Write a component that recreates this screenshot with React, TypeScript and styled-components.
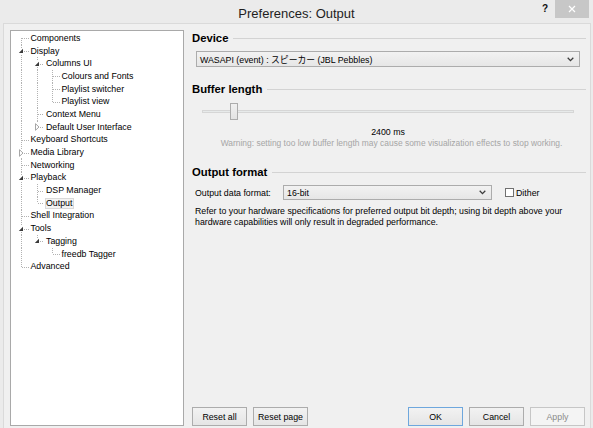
import React from 'react';
import styled, { createGlobalStyle } from 'styled-components';

const GlobalStyle = createGlobalStyle`
  html, body {
    margin: 0;
    padding: 0;
  }
  body {
    font-family: "Liberation Sans", Arial, "Noto Sans CJK JP", sans-serif;
    font-size: 8.8px;
    color: #000;
    background: #ebebeb;
  }
  * {
    box-sizing: border-box;
  }
`;

const Window = styled.div`
  width: 593px;
  height: 428px;
  overflow: hidden;
  display: flex;
  flex-direction: column;
  background: #ebebeb;
`;

const TitleBar = styled.div`
  flex: none;
  height: 23px;
  display: grid;
  grid-template-columns: 1fr auto 1fr;
`;

const Title = styled.div`
  grid-column: 2;
  padding-top: 7px;
  font-size: 13px;
  line-height: 14px;
  color: #1e1e1e;
  white-space: nowrap;
`;

const CaptionButtons = styled.div`
  grid-column: 3;
  justify-self: end;
  display: flex;
  align-items: flex-start;
  padding-right: 4px;
`;

const HelpGlyph = styled.span`
  margin-top: 4px;
  margin-right: 7px;
  font-size: 10px;
  font-weight: bold;
  line-height: 10px;
  color: #111;
`;

const CloseButton = styled.div`
  width: 34px;
  height: 18px;
  background: #c7c7c7;
  display: flex;
  align-items: center;
  justify-content: center;
`;

const Client = styled.div`
  flex: 1;
  min-height: 0;
  margin: 0 2px 0 3px;
  border: 1px solid #dadada;
  border-bottom: none;
  background: #f0f0f0;
  display: flex;
  gap: 6px;
  padding: 6px 4px 2px 6px;
`;

/* ---------- tree ---------- */

const Tree = styled.div`
  flex: none;
  width: 174px;
  border: 1px solid #a9a9a9;
  background: #fff;
  padding: 1px 0 0 3px;
`;

const Row = styled.div`
  height: 12.7px;
  display: flex;
  align-items: center;
  white-space: nowrap;
`;

const dotsV = 'repeating-linear-gradient(to bottom, #b2b2b2 0 1px, transparent 1px 2px)';
const dotsH = 'repeating-linear-gradient(to right, #b2b2b2 0 1px, transparent 1px 2px)';

const Guide = styled.span<{ $up?: boolean; $down?: boolean; $branch?: boolean }>`
  position: relative;
  flex: none;
  align-self: stretch;
  width: 15.5px;

  &::before {
    content: '';
    display: ${(p) => (p.$up || p.$down ? 'block' : 'none')};
    position: absolute;
    left: 7px;
    width: 1px;
    top: ${(p) => (p.$up ? '0' : '50%')};
    bottom: ${(p) => (p.$down ? '0' : '50%')};
    background: ${dotsV};
  }

  &::after {
    content: '';
    display: ${(p) => (p.$branch ? 'block' : 'none')};
    position: absolute;
    left: 8px;
    right: 1px;
    top: 50%;
    height: 1px;
    background: ${dotsH};
  }
`;

const Expander = styled.svg`
  position: absolute;
  z-index: 1;
  left: 4px;
  top: 50%;
  transform: translateY(-50%);
  background: #fff;
`;

const Label = styled.span<{ $selected?: boolean }>`
  border: 1px solid ${(p) => (p.$selected ? '#d9d9d9' : 'transparent')};
  background: ${(p) => (p.$selected ? '#f3f3f3' : 'transparent')};
  padding-right: 1px;
  line-height: 9px;
`;

/* ---------- right panel ---------- */

const Panel = styled.div`
  flex: 1;
  min-width: 0;
  display: flex;
  flex-direction: column;
`;

const Heading = styled.div<{ $top: number }>`
  margin-top: ${(p) => p.$top}px;
  padding-left: 2px;
  height: 14px;
  display: flex;
  align-items: center;
  gap: 5px;
  font-size: 11.3px;
  font-weight: bold;
  white-space: nowrap;

  &::after {
    content: '';
    flex: 1;
    border-top: 1px solid #d3d3d3;
    margin-top: 1px;
  }
`;

const Combo = styled.div<{ $width: number; $height: number }>`
  flex: none;
  width: ${(p) => p.$width}px;
  height: ${(p) => p.$height}px;
  border: 1px solid #acacac;
  background: linear-gradient(#f2f2f2, #e6e6e6);
  display: flex;
  align-items: center;
  justify-content: space-between;
  padding: 0 5px 0 3px;
  white-space: nowrap;
`;

const DeviceCombo = styled(Combo)`
  margin: 6px 0 0 6px;
`;

const Slider = styled.div`
  position: relative;
  margin: 7px 12px 0 12px;
  height: 17px;
  display: flex;
  align-items: center;
`;

const Track = styled.div`
  flex: 1;
  height: 3px;
  border: 1px solid #d6d6d6;
  background: #e7eaea;
`;

const Thumb = styled.div<{ $left: number }>`
  position: absolute;
  top: 0;
  left: ${(p) => p.$left}px;
  width: 8px;
  height: 17px;
  border: 1px solid #acacac;
  background: linear-gradient(#f0f0f0, #e3e3e3);
`;

const ValueText = styled.div`
  margin-top: 6.5px;
  line-height: 11px;
  text-align: center;
`;

const Warning = styled.div`
  padding-left: 7px;
  font-size: 8.45px;
  line-height: 11px;
  text-align: center;
  color: #a6a6a6;
  white-space: nowrap;
`;

const FormatRow = styled.div`
  margin-top: 6px;
  padding-left: 5px;
  height: 15px;
  display: flex;
  align-items: center;
  white-space: nowrap;
`;

const FieldLabel = styled.span`
  width: 88px;
`;

const CheckBox = styled.span`
  margin-left: 13px;
  width: 9px;
  height: 9px;
  border: 1px solid #707070;
  background: #fff;
`;

const CheckLabel = styled.span`
  margin-left: 2px;
`;

const Description = styled.div`
  margin-top: 6px;
  padding-left: 5px;
  line-height: 10.7px;
  white-space: nowrap;
`;

const Footer = styled.div`
  margin-top: auto;
  padding: 0 1px 0 2px;
  display: flex;
  gap: 6px;
`;

const Button = styled.div<{ $default?: boolean; $disabled?: boolean }>`
  width: 55px;
  height: 19px;
  display: flex;
  align-items: center;
  justify-content: center;
  border: 1px solid ${(p) => (p.$default ? '#6ea7dd' : p.$disabled ? '#c6c6c6' : '#acacac')};
  background: ${(p) => (p.$disabled ? '#f4f4f4' : 'linear-gradient(#f2f2f2, #e5e5e5)')};
  color: ${(p) => (p.$disabled ? '#8a8a8a' : '#000')};
`;

const FooterGap = styled.div`
  flex: 1;
`;

/* ---------- data ---------- */

interface TreeNode {
  label: string;
  children?: TreeNode[];
  collapsed?: boolean;
  selected?: boolean;
}

const tree: TreeNode[] = [
  { label: 'Components' },
  {
    label: 'Display',
    children: [
      {
        label: 'Columns UI',
        children: [{ label: 'Colours and Fonts' }, { label: 'Playlist switcher' }, { label: 'Playlist view' }],
      },
      { label: 'Context Menu' },
      { label: 'Default User Interface', collapsed: true },
    ],
  },
  { label: 'Keyboard Shortcuts' },
  { label: 'Media Library', collapsed: true },
  { label: 'Networking' },
  { label: 'Playback', children: [{ label: 'DSP Manager' }, { label: 'Output', selected: true }] },
  { label: 'Shell Integration' },
  { label: 'Tools', children: [{ label: 'Tagging', children: [{ label: 'freedb Tagger' }] }] },
  { label: 'Advanced' },
];

interface FlatRow {
  node: TreeNode;
  guides: boolean[];
  up: boolean;
  down: boolean;
}

const flatten = (nodes: TreeNode[], guides: boolean[], out: FlatRow[]) => {
  nodes.forEach((node, i) => {
    const last = i === nodes.length - 1;
    out.push({ node, guides, up: !(guides.length === 0 && i === 0), down: !last });
    if (node.children && !node.collapsed) flatten(node.children, [...guides, !last], out);
  });
  return out;
};

const rows = flatten(tree, [], []);

const ChevronDown = () => (
  <svg width="7" height="5" viewBox="0 0 7 5">
    <path d="M0.7 0.8 L3.5 3.6 L6.3 0.8" fill="none" stroke="#3c3c3c" strokeWidth="1.3" />
  </svg>
);

const App: React.FC = () => {
  return (
    <>
      <GlobalStyle />
      <Window>
        <TitleBar>
          <Title>Preferences: Output</Title>
          <CaptionButtons>
            <HelpGlyph>?</HelpGlyph>
            <CloseButton>
              <svg width="8" height="8" viewBox="0 0 8 8">
                <path d="M1 1 L7 7 M7 1 L1 7" stroke="#fff" strokeWidth="1.2" />
              </svg>
            </CloseButton>
          </CaptionButtons>
        </TitleBar>

        <Client>
          <Tree>
            {rows.map((row) => {
              const { node } = row;
              const open = !!node.children && !node.collapsed;
              return (
                <Row key={node.label}>
                  {row.guides.map((more, i) => (
                    <Guide key={i} $up={more} $down={more} />
                  ))}
                  <Guide $up={row.up} $down={row.down} $branch>
                    {open && (
                      <Expander width="6" height="6" viewBox="0 0 6 6">
                        <polygon points="5,0.8 5,5 0.8,5" fill="#3a3a3a" />
                      </Expander>
                    )}
                    {node.collapsed && (
                      <Expander width="6" height="8" viewBox="0 0 6 8">
                        <polygon points="1.5,0.7 5,4 1.5,7.3" fill="none" stroke="#a6a6a6" strokeWidth="1" />
                      </Expander>
                    )}
                  </Guide>
                  <Label $selected={node.selected}>{node.label}</Label>
                </Row>
              );
            })}
          </Tree>

          <Panel>
            <Heading $top={1}>Device</Heading>
            <DeviceCombo $width={384} $height={16}>
              <span>WASAPI (event) : スピーカー (JBL Pebbles)</span>
              <ChevronDown />
            </DeviceCombo>

            <Heading $top={15}>Buffer length</Heading>
            <Slider>
              <Track />
              <Thumb $left={28} />
            </Slider>
            <ValueText>2400 ms</ValueText>
            <Warning>Warning: setting too low buffer length may cause some visualization effects to stop working.</Warning>

            <Heading $top={16.5}>Output format</Heading>
            <FormatRow>
              <FieldLabel>Output data format:</FieldLabel>
              <Combo $width={209} $height={15}>
                <span>16-bit</span>
                <ChevronDown />
              </Combo>
              <CheckBox />
              <CheckLabel>Dither</CheckLabel>
            </FormatRow>
            <Description>
              Refer to your hardware specifications for preferred output bit depth; using bit depth above your
              <br />
              hardware capabilities will only result in degraded performance.
            </Description>

            <Footer>
              <Button>Reset all</Button>
              <Button>Reset page</Button>
              <FooterGap />
              <Button $default>OK</Button>
              <Button>Cancel</Button>
              <Button $disabled>Apply</Button>
            </Footer>
          </Panel>
        </Client>
      </Window>
    </>
  );
};

export default App;
